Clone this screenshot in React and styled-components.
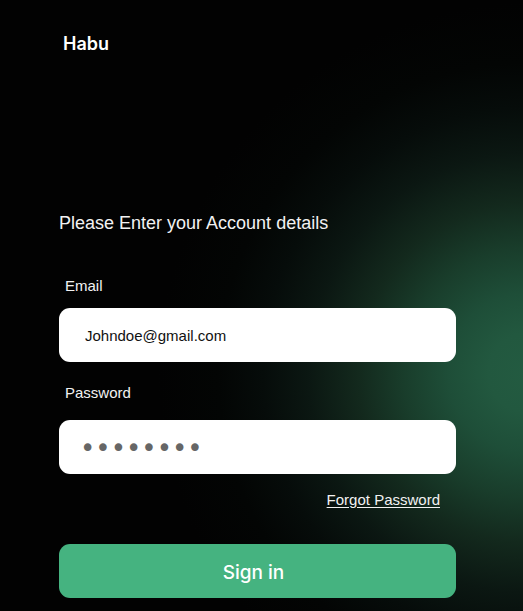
import React from "react";
import styled, { createGlobalStyle } from "styled-components";

const GlobalStyle = createGlobalStyle`
  *, *::before, *::after { box-sizing: border-box; }
  body {
    margin: 0;
    background: #020202;
    color: #f2f2f2;
    font-family: "Liberation Sans", Arial, sans-serif;
  }
`;

const Page = styled.main`
  min-height: 100vh;
  padding: 32px 67px 12px 59px;
  background: radial-gradient(
    circle at 101% 61%,
    #235b41 0,
    #22583f 40px,
    #1e4e38 80px,
    #193d2b 125px,
    #13291d 170px,
    #0b1712 220px,
    #060c0a 265px,
    #030504 310px,
    #020202 370px
  ) #020202;
`;

const Brand = styled.header`
  padding-left: 4px;
  font: 600 18px/24px Inter, sans-serif;
  color: #ffffff;
`;

const Form = styled.form`
  display: flex;
  flex-direction: column;
  margin-top: 155px;
`;

const Title = styled.h1`
  margin: 0 0 41px;
  font-size: 18px;
  line-height: 24px;
  font-weight: 400;
`;

const Field = styled.div`
  display: flex;
  flex-direction: column;
  gap: ${({ $gap }) => $gap}px;
  margin-bottom: ${({ $after }) => $after}px;
`;

const Label = styled.label`
  padding-left: 6px;
  font-size: 15px;
  line-height: 20px;
`;

const Input = styled.input`
  width: 100%;
  height: 54px;
  padding: 0 26px;
  border: 0;
  border-radius: 11px;
  background: #ffffff;
  color: #111111;
  font: 400 15px "Liberation Sans", Arial, sans-serif;
`;

const PasswordInput = styled(Input)`
  padding: 2px 21px 0;
  color: #666666;
  font: 400 26px "DejaVu Sans", sans-serif;
`;

const ForgotLink = styled.a`
  align-self: flex-end;
  margin: 0 16px 34px 0;
  color: inherit;
  font-size: 15px;
  line-height: 20px;
  text-decoration: underline;
  text-underline-offset: 2px;
`;

const SubmitButton = styled.button`
  height: 54px;
  padding: 3px 12px 0 4px;
  border: 0;
  border-radius: 11px;
  background: #45b380;
  color: #ffffff;
  font: 500 19px Inter, sans-serif;
  cursor: pointer;
`;

export default function App() {
  return (
    <>
      <GlobalStyle />
      <Page>
        <Brand>Habu</Brand>
        <Form onSubmit={(event) => event.preventDefault()}>
          <Title>Please Enter your Account details</Title>
          <Field $gap={12} $after={21}>
            <Label htmlFor="email">Email</Label>
            <Input id="email" type="email" defaultValue="Johndoe@gmail.com" />
          </Field>
          <Field $gap={17} $after={16}>
            <Label htmlFor="password">Password</Label>
            <PasswordInput id="password" type="password" defaultValue="password" />
          </Field>
          <ForgotLink href="#forgot">Forgot Password</ForgotLink>
          <SubmitButton type="submit">Sign in</SubmitButton>
        </Form>
      </Page>
    </>
  );
}
